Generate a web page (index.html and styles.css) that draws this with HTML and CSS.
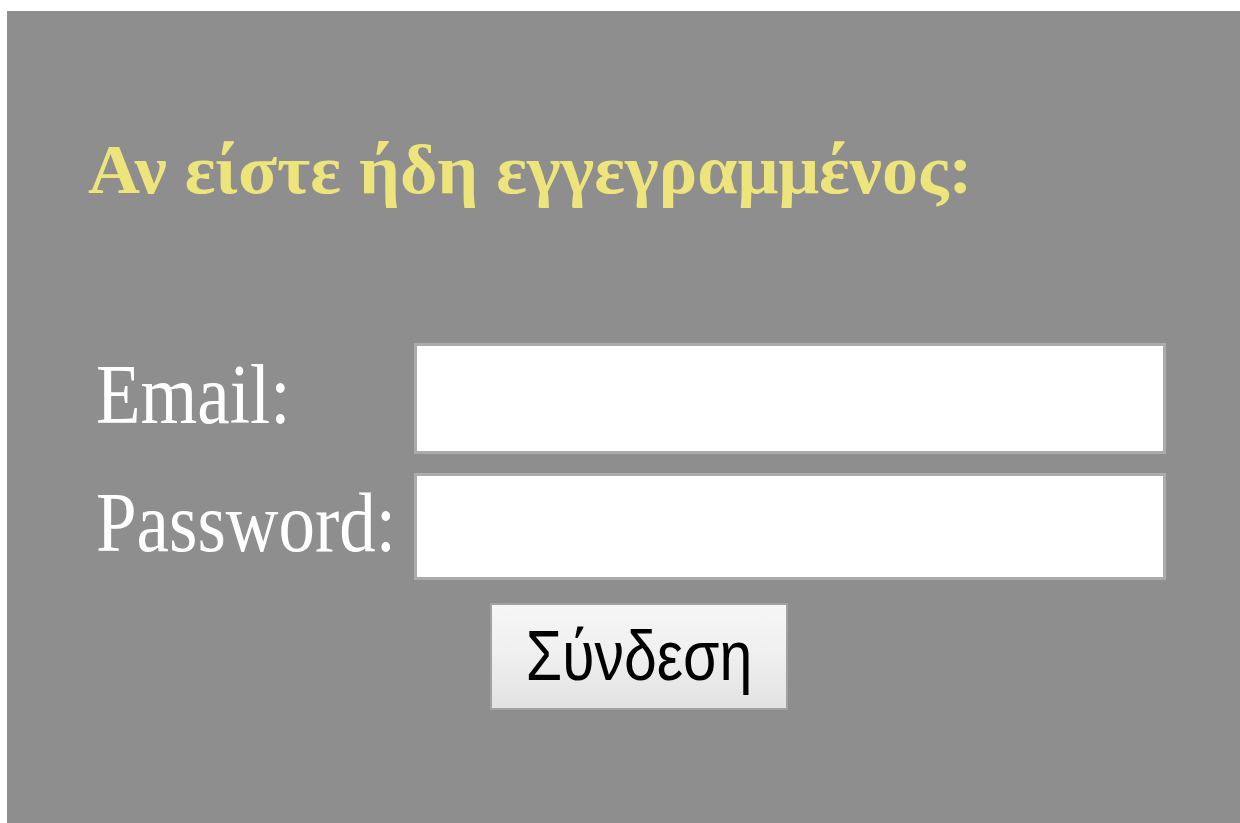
FILE: index.html
```html
<!DOCTYPE html>
<html lang="el">
<head>
<meta charset="utf-8">
<title>Σύνδεση</title>
<link rel="stylesheet" href="styles.css">
</head>
<body>
<div class="panel">
  <h2 class="title"><span class="tall wide">Αν είστε ήδη εγγεγραμμένος:</span></h2>
  <form class="login" action="#">
    <label class="lbl" for="email"><span class="tall">Email:</span></label>
    <input class="field" id="email" type="text">
    <label class="lbl" for="pass"><span class="tall">Password:</span></label>
    <input class="field" id="pass" type="password">
    <button class="btn" type="button"><span class="tall">Σύνδεση</span></button>
  </form>
</div>
</body>
</html>
```

FILE: styles.css
```css
html, body {
  margin: 0;
  padding: 0;
  background: #ffffff;
}

.panel {
  margin: 11px 0 0 7px;
  height: 812px;
  background: #8e8e8e;
  box-sizing: border-box;
  padding: 118px 0 0 0;
  overflow: hidden;
}

/* the glyphs are drawn a little taller than wide */
.tall {
  display: inline-block;
  transform: scaleY(1.18);
  transform-origin: 50% 50%;
}

.tall.wide {
  transform: scale(1.2, 1.18);
  transform-origin: 0 50%;
}

.title {
  margin: 0 0 0 81px;
  font-family: "Liberation Serif", "Times New Roman", serif;
  font-weight: bold;
  font-size: 60px;
  line-height: 80px;
  color: #ede57b;
  white-space: nowrap;
}

.login {
  display: grid;
  grid-template-columns: 318px 752px;
  grid-template-rows: 111px 107px auto;
  row-gap: 19px;
  margin: 134px 0 0 89px;
}

.lbl {
  align-self: center;
  font-family: "Liberation Serif", "Times New Roman", serif;
  font-size: 73px;
  line-height: 1;
  color: #ffffff;
  white-space: nowrap;
  margin-top: -8px;
}

.lbl .tall {
  transform: scaleY(1.15);
}

.field {
  box-sizing: border-box;
  width: 752px;
  height: 100%;
  margin: 0;
  padding: 0 8px;
  border: 3px solid #ababab;
  background: #ffffff;
  outline: none;
}

.btn {
  grid-column: 1 / -1;
  justify-self: start;
  margin: 4px 0 0 394px;
  width: 298px;
  height: 107px;
  padding: 0;
  border: 2px solid #a2a2a2;
  background: linear-gradient(#f6f6f6, #f0f0f0 45%, #e2e2e2);
  font-family: "Liberation Sans", Arial, sans-serif;
  font-size: 59px;
  line-height: 1;
  color: #000000;
}
```
